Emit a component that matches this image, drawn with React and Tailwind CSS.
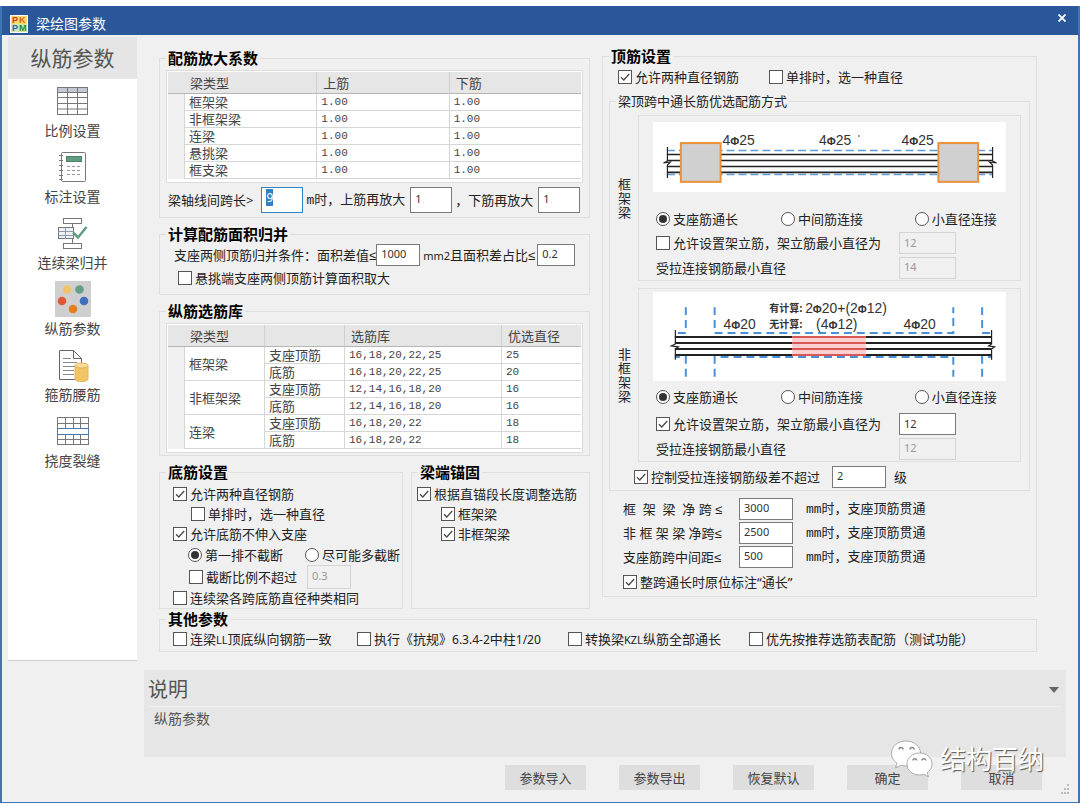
import React, { useEffect, useRef } from "react";
import { clsx } from "clsx";

const factorRows = ["框架梁", "非框架梁", "连梁", "悬挑梁", "框支梁"];

const rebarRows = [
  { type: "框架梁", top: ["16,18,20,22,25", "25"], bottom: ["16,18,20,22,25", "20"] },
  { type: "非框架梁", top: ["12,14,16,18,20", "16"], bottom: ["12,14,16,18,20", "16"] },
  { type: "连梁", top: ["16,18,20,22", "18"], bottom: ["16,18,20,22", "18"] },
];

const spanRows = [
  { id: "span-frame", label: "框  架  梁  净 跨 ≤", value: "3000" },
  { id: "span-other", label: "非 框 架 梁 净跨≤", value: "2500" },
  { id: "span-support", label: "支座筋跨中间距≤", value: "500" },
];

/* ---------- Form controls ---------- */

const Check = ({ label, checked = false, className }) => (
  <label className={clsx("flex h-5 items-center gap-[3px] whitespace-nowrap", className)}>
    <span className="relative flex shrink-0">
      <input
        type="checkbox"
        defaultChecked={checked}
        className="peer size-[14px] appearance-none border border-[#555] bg-white"
      />
      <svg
        viewBox="0 0 14 14"
        className="pointer-events-none absolute inset-0 hidden size-[14px] peer-checked:block"
      >
        <path d="M3 7.2 L5.8 10 L11.2 4" fill="none" stroke="#4a4a4a" strokeWidth="1.3" />
      </svg>
    </span>
    <span>{label}</span>
  </label>
);

const Radio = ({ label, name, checked = false }) => (
  <label className="flex h-5 items-center gap-[3px] whitespace-nowrap">
    <input
      type="radio"
      name={name}
      defaultChecked={checked}
      className="grid size-[14px] shrink-0 appearance-none place-items-center rounded-full border border-[#555] bg-white before:size-2 before:rounded-full checked:before:bg-[#333]"
    />
    {label}
  </label>
);

const Field = ({ id, value, disabled = false, className }) => (
  <input
    id={id}
    type="text"
    defaultValue={value}
    disabled={disabled}
    className={clsx(
      "min-w-0 shrink-0 border px-1 pb-[3px] text-[11px] leading-4",
      disabled ? "border-[#d4d4d4] bg-[#f0f0f0] text-[#999]" : "border-[#7a7a7a] bg-white text-[#333]",
      className
    )}
  />
);

const Group = ({ title, plain = false, className, children }) => (
  <fieldset className={clsx("min-w-0 border border-[#dfdfdf]", className)}>
    <legend
      className={clsx(
        "px-0.5 leading-5",
        plain ? "ml-1.5 text-[13px]" : "ml-1.5 text-[15px] font-bold text-black"
      )}
    >
      {title}
    </legend>
    {children}
  </fieldset>
);

/* ---------- Tables ---------- */

const Th = ({ children }) => (
  <th className="h-[22px] border-b border-l border-b-[#b5b5b5] border-l-[#d0d0d0] bg-[#e6e6e6] px-1.5 py-0 text-left font-normal leading-5 text-[#444] first:border-l-0">
    {children}
  </th>
);

const Td = ({ children, mono = false, rowSpan }) => (
  <td
    rowSpan={rowSpan}
    className={clsx(
      "h-[17px] border-b border-l border-[#d6d6d6] px-1 py-0 leading-4 text-[#444]",
      mono && "font-['Liberation_Mono',monospace] text-[11px]"
    )}
  >
    {children}
  </td>
);

const TableFrame = ({ children }) => (
  <div className="mx-1.5 border border-[#dcdcdc] bg-white px-px pt-px pb-[3px]">{children}</div>
);

const FactorTable = () => (
  <TableFrame>
    <table className="w-full table-fixed border-separate border-spacing-0">
      <colgroup>
        <col className="w-4" />
        <col />
        <col />
        <col />
      </colgroup>
      <thead>
        <tr>
          <Th />
          <th className="h-[22px] border-b border-[#b5b5b5] bg-[#e6e6e6] px-1.5 py-0 text-left font-normal leading-5 text-[#444]">
            梁类型
          </th>
          <Th>上筋</Th>
          <Th>下筋</Th>
        </tr>
      </thead>
      <tbody>
        {factorRows.map((name) => (
          <tr key={name}>
            <td className="bg-[#f0f0f0] p-0"></td>
            <Td>{name}</Td>
            <Td mono>1.00</Td>
            <Td mono>1.00</Td>
          </tr>
        ))}
      </tbody>
    </table>
  </TableFrame>
);

const RebarTable = () => (
  <TableFrame>
    <table className="w-full table-fixed border-separate border-spacing-0">
      <colgroup>
        <col className="w-4" />
        <col className="w-20" />
        <col className="w-20" />
        <col />
        <col className="w-20" />
      </colgroup>
      <thead>
        <tr>
          <Th />
          <th className="h-[22px] border-b border-[#b5b5b5] bg-[#e6e6e6] px-1.5 py-0 text-left font-normal leading-5 text-[#444]">
            梁类型
          </th>
          <Th />
          <Th>选筋库</Th>
          <Th>优选直径</Th>
        </tr>
      </thead>
      <tbody>
        {rebarRows.map((row) => (
          <React.Fragment key={row.type}>
            <tr>
              <td rowSpan={2} className="bg-[#f0f0f0] p-0"></td>
              <Td rowSpan={2}>{row.type}</Td>
              <Td>支座顶筋</Td>
              <Td mono>{row.top[0]}</Td>
              <Td mono>{row.top[1]}</Td>
            </tr>
            <tr>
              <Td>底筋</Td>
              <Td mono>{row.bottom[0]}</Td>
              <Td mono>{row.bottom[1]}</Td>
            </tr>
          </React.Fragment>
        ))}
      </tbody>
    </table>
  </TableFrame>
);

/* ---------- Sidebar icons ---------- */

const GridIcon = () => (
  <svg viewBox="0 0 36 36" className="size-9" fill="none" stroke="#777">
    <rect x="2.5" y="4.5" width="30" height="27" fill="#fff" />
    <rect x="3" y="5" width="29" height="4" fill="#c3cad6" stroke="none" />
    <path d="M2.5 9.5h30M2.5 14.5h30M2.5 20.5h30M2.5 26h30M12.5 4.5v27M22.5 4.5v27" />
  </svg>
);

const NotebookIcon = () => (
  <svg viewBox="0 0 36 36" className="size-9" fill="none" stroke="#777">
    <rect x="6.5" y="3.5" width="24" height="29" rx="1" fill="#fff" />
    <rect x="11.5" y="7.5" width="15" height="5" fill="#5f9c80" stroke="#4d8269" />
    <path d="M4 6.5h4M4 11.5h4M4 16.5h4M4 21.5h4M4 26.5h4M4 30.5h4" />
    <path d="M12 17.5h14M12 21.5h14M12 25.5h14" stroke="#999" strokeDasharray="3 2" />
  </svg>
);

const MergeIcon = () => (
  <svg viewBox="0 0 36 36" className="size-9" fill="none" stroke="#777">
    <rect x="8.5" y="3.5" width="18" height="5" fill="#fff" />
    <path d="M17.5 8.5v4M17.5 24v4" />
    <rect x="3.5" y="12.5" width="15" height="11" fill="#eef2f8" />
    <path d="M3.5 16.5h15M3.5 20.5h15M10.5 12.5v11" stroke="#8e99aa" />
    <path d="M18 17.5l5 5 8.5-10.5" stroke="#5f9c80" strokeWidth="2.5" />
    <rect x="8.5" y="28.5" width="18" height="5" fill="#fff" />
  </svg>
);

const DotsIcon = () => (
  <svg viewBox="0 0 36 36" className="size-9 bg-[#cfcfcf]">
    <circle cx="12" cy="8.5" r="4.3" fill="#f2c468" />
    <circle cx="24.5" cy="8.5" r="4.3" fill="#669f85" />
    <circle cx="7" cy="20" r="4.3" fill="#dc5a3a" />
    <circle cx="29" cy="20" r="4.3" fill="#3f6fbf" />
    <circle cx="18" cy="28" r="4.3" fill="#e2801f" />
  </svg>
);

const DocIcon = () => (
  <svg viewBox="0 0 36 36" className="size-9" fill="none" stroke="#666">
    <path d="M4.5 3.5h14l8 8v21h-22z" fill="#fff" />
    <path d="M18.5 3.5v8h8" />
    <path d="M8 11.5h8M8 15.5h14M8 19.5h12M8 23.5h11M8 27.5h11" stroke="#888" />
    <path d="M20 18.5v13.5c0 3.4 13 3.4 13 0v-13.5z" fill="#f2c468" stroke="#e8b653" />
    <ellipse cx="26.5" cy="18.5" rx="6.5" ry="2.5" fill="#f8dc9c" stroke="#e8b653" />
  </svg>
);

const CrackIcon = () => (
  <svg viewBox="0 0 36 36" className="size-9" fill="none" stroke="#777">
    <rect x="2.5" y="4.5" width="31" height="27" fill="#fff" />
    <path d="M2.5 10.5h31M2.5 26.5h31M10.5 4.5v11M18.5 4.5v11M25.5 4.5v11M10.5 21.5v10M18.5 21.5v10M25.5 21.5v10" />
    <rect x="2.5" y="15.5" width="31" height="6" fill="#fff" stroke="#4a78b5" />
  </svg>
);

const navItems = [
  { label: "比例设置", Icon: GridIcon },
  { label: "标注设置", Icon: NotebookIcon },
  { label: "连续梁归并", Icon: MergeIcon },
  { label: "纵筋参数", Icon: DotsIcon },
  { label: "箍筋腰筋", Icon: DocIcon },
  { label: "挠度裂缝", Icon: CrackIcon },
];

const Sidebar = () => (
  <nav className="mt-0.5 ml-1.5 flex w-[129px] shrink-0 flex-col border-b border-[#d0d0d0] bg-white">
    <h2 className="h-[42px] bg-[#e5e5e5] text-center text-[21px] leading-[42px] text-[#555]">纵筋参数</h2>
    <div className="flex flex-col items-center gap-2 pt-1">
      {navItems.map(({ label, Icon }) => (
        <button key={label} type="button" className="flex flex-col items-center gap-0.5">
          <Icon />
          <span className="h-5 text-sm leading-5 text-[#444]">{label}</span>
        </button>
      ))}
    </div>
  </nav>
);

/* ---------- Beam drawings ---------- */

// Bar diameter sign used inside a callout such as 4Φ25
const Bar = () => (
  <tspan fontSize="11" fontWeight="bold">Φ</tspan>
);

const Callout = ({ x, y, children }) => (
  <text x={x} y={y} fontSize="14" fill="#333" className="font-['Liberation_Sans',sans-serif]">
    {children}
  </text>
);

const FrameBeam = () => (
  <svg viewBox="0 0 355 70" className="h-[70px] w-full bg-white" role="img" aria-label="框架梁">
    <g stroke="#5f9cd8" strokeWidth="1.5" strokeDasharray="8 4">
      <path d="M14 28.5h328M14 52.5h328" />
    </g>
    <path d="M14 32.5h328M14 38.5h328M14 44.5h328M14 50.5h328" stroke="#222" strokeWidth="1.6" />
    <path
      d="M14.5 25v14l-4 2 7-1-3 3v13M341.5 25v14l4 2-7-1 3 3v13"
      fill="none"
      stroke="#222"
      strokeWidth="1.2"
    />
    <g fill="#d0d0d0" stroke="#ea913c" strokeWidth="2">
      <rect x="28" y="21" width="40" height="39" />
      <rect x="287" y="21" width="40" height="39" />
    </g>
    <Callout x="70" y="23">4<Bar />25</Callout>
    <Callout x="167" y="23">4<Bar />25</Callout>
    <Callout x="250" y="23">4<Bar />25</Callout>
    <circle cx="207" cy="14" r="1" fill="#777" />
  </svg>
);

const OtherBeam = () => (
  <svg viewBox="0 0 355 89" className="h-[89px] w-full bg-white" role="img" aria-label="非框架梁">
    <g fill="none" stroke="#4a90d9" strokeWidth="2" strokeDasharray="8 5">
      <path d="M33 15v26h-11M62 15v26h240v-26M331 15v26h10" />
      <path d="M33 85v-20h-11M62 85v-20h240v20M331 85v-20h10" />
    </g>
    <path d="M22 45h318M22 51h318M22 57h318M22 63h318" stroke="#222" strokeWidth="2" />
    <rect x="140" y="44" width="74" height="20" fill="#fbd0d0" />
    <path d="M140 45h74M140 51h74M140 57h74M140 63h74" stroke="#d95757" strokeWidth="2" />
    <path
      d="M22.5 38v14l-4 2 7 1-3 2v11M340.5 38v14l-3 2 6 1-3 2v11"
      fill="none"
      stroke="#222"
      strokeWidth="1.2"
    />
    <g fontSize="10" fontWeight="bold" fill="#333" className="font-['Noto_Sans_CJK_SC',sans-serif]">
      <text x="117" y="20">有计算:</text>
      <text x="117" y="36">无计算:</text>
    </g>
    <Callout x="153" y="21">2<Bar />20+(2<Bar />12)</Callout>
    <Callout x="164" y="37">(4<Bar />12)</Callout>
    <Callout x="71" y="37">4<Bar />20</Callout>
    <Callout x="252" y="37">4<Bar />20</Callout>
  </svg>
);

const SpliceRadios = ({ name }) => (
  <div className="grid grid-cols-[126fr_135fr_106fr] pl-[17px]">
    <Radio name={name} label="支座筋通长" checked />
    <Radio name={name} label="中间筋连接" />
    <Radio name={name} label="小直径连接" />
  </div>
);

const BeamOptions = ({ id, checked, erection, minimum }) => (
  <div className="pr-16 pl-[17px]">
    <div className="flex h-[25px] items-center justify-between">
      <Check label="允许设置架立筋，架立筋最小直径为" checked={checked} />
      <input
        type="text"
        aria-label="架立筋最小直径"
        defaultValue={erection}
        disabled={!checked}
        className="h-[22px] w-[57px] border border-[#7a7a7a] bg-white px-1 text-[11px] text-[#333] disabled:border-[#d4d4d4] disabled:bg-[#f0f0f0] disabled:text-[#999]"
      />
    </div>
    <div className="flex h-[25px] items-center justify-between">
      <label htmlFor={id}>受拉连接钢筋最小直径</label>
      <Field id={id} value={minimum} disabled className="h-[22px] w-[57px]" />
    </div>
  </div>
);

/* ---------- Parameter groups ---------- */

const FactorGroup = () => {
  const spanRef = useRef(null);

  useEffect(() => {
    // Start with the span length selected, ready to be typed over
    spanRef.current.focus();
    spanRef.current.select();
  }, []);

  return (
    <Group title="配筋放大系数">
      <div className="pt-0.5">
        <FactorTable />
      </div>
      <div className="flex items-center pt-1 pb-1 pl-2 whitespace-nowrap">
        <label htmlFor="span-length">梁轴线间跨长&gt;</label>
        <input
          ref={spanRef}
          id="span-length"
          type="text"
          defaultValue="9"
          className="ml-2 h-[26px] w-[42px] border border-[#2f83c5] bg-white px-1 pb-1.5 text-[12px] leading-4 outline-none selection:bg-[#2f83c5] selection:text-white"
        />
        <label htmlFor="top-factor" className="ml-[3px]">
          <span className="font-['Liberation_Mono',monospace]">m</span>时，上筋再放大
        </label>
        <Field id="top-factor" value="1" className="ml-[5px] h-[26px] w-[42px]" />
        <label htmlFor="bottom-factor" className="ml-[3px]">，下筋再放大</label>
        <Field id="bottom-factor" value="1" className="ml-[5px] h-[26px] w-[42px]" />
      </div>
    </Group>
  );
};

const MergeGroup = () => (
  <Group title="计算配筋面积归并">
    <div className="flex items-center pl-[14px] whitespace-nowrap">
      <label htmlFor="area-diff">支座两侧顶筋归并条件：面积差值≤</label>
      <Field id="area-diff" value="1000" className="h-[22px] w-11" />
      <label htmlFor="area-ratio" className="ml-[3px]">
        <span className="text-[11px]">mm2</span>且面积差占比≤
      </label>
      <Field id="area-ratio" value="0.2" className="ml-0.5 h-[22px] w-[38px]" />
    </div>
    <div className="pt-0.5 pb-1.5 pl-[18px]">
      <Check label="悬挑端支座两侧顶筋计算面积取大" />
    </div>
  </Group>
);

const BottomGroup = () => (
  <Group title="底筋设置">
    <div className="pt-0.5 pl-[13px]">
      <Check label="允许两种直径钢筋" checked />
      <Check label="单排时，选一种直径" className="pl-[18px]" />
      <Check label="允许底筋不伸入支座" checked />
      <div className="flex h-[22px] items-center justify-between pr-0.5 pl-[15px]">
        <Radio name="cut" label="第一排不截断" checked />
        <Radio name="cut" label="尽可能多截断" />
      </div>
      <div className="flex h-[22px] items-center gap-2.5 pl-4">
        <Check label="截断比例不超过" />
        <input
          type="text"
          aria-label="截断比例"
          defaultValue="0.3"
          disabled
          className="h-6 w-11 border border-[#d4d4d4] px-1 pb-1 text-[11px] text-[#999]"
        />
      </div>
      <Check label="连续梁各跨底筋直径种类相同" />
    </div>
  </Group>
);

const AnchorGroup = () => (
  <Group title="梁端锚固">
    <div className="pt-0.5 pl-[5px]">
      <Check label="根据直锚段长度调整选筋" checked />
      <Check label="框架梁" checked className="pl-6" />
      <Check label="非框架梁" checked className="pl-6" />
    </div>
  </Group>
);

const SideLabel = ({ children }) => (
  <span className="ml-2 w-[13px] shrink-0 text-center leading-[14px]">{children}</span>
);

const TopGroup = () => (
  <Group title="顶筋设置" className="self-start">
    <div className="flex gap-[30px] pt-px pl-[15px]">
      <Check label="允许两种直径钢筋" checked />
      <Check label="单排时，选一种直径" />
    </div>
    <Group title="梁顶跨中通长筋优选配筋方式" plain className="mx-1.5 mt-1">
      <div className="flex items-center gap-[7px] pt-1 pr-2">
        <SideLabel>框架梁</SideLabel>
        <div className="min-w-0 flex-1 border border-[#dfdfdf]">
          <div className="px-[14px] pt-1.5">
            <FrameBeam />
          </div>
          <div className="pt-[17px] pb-px">
            <SpliceRadios name="frame-splice" />
          </div>
          <BeamOptions id="frame-min" checked={false} erection="12" minimum="14" />
        </div>
      </div>
      <div className="flex items-center gap-[7px] pt-[7px] pr-2">
        <SideLabel>非框架梁</SideLabel>
        <div className="min-w-0 flex-1 border border-[#dfdfdf]">
          <div className="px-[14px] pt-[3px]">
            <OtherBeam />
          </div>
          <div className="pt-1.5 pb-1">
            <SpliceRadios name="other-splice" />
          </div>
          <BeamOptions id="other-min" checked erection="12" minimum="12" />
        </div>
      </div>
      <div className="flex items-center pt-1 pb-0.5 pl-6">
        <Check label="控制受拉连接钢筋级差不超过" checked />
        <Field id="grade-diff" value="2" className="ml-3 h-[22px] w-[54px]" />
        <label htmlFor="grade-diff" className="ml-2">级</label>
      </div>
    </Group>
    <div className="flex flex-col gap-0.5 pt-[7px] pl-5">
      {spanRows.map((row) => (
        <div key={row.id} className="flex items-center">
          <label htmlFor={row.id} className="w-[116px] whitespace-pre">{row.label}</label>
          <Field id={row.id} value={row.value} className="h-[22px] w-[54px]" />
          <span className="ml-[13px]">
            <span className="font-['Liberation_Mono',monospace]">mm</span>时，支座顶筋贯通
          </span>
        </div>
      ))}
    </div>
    <div className="pt-1 pb-1 pl-5">
      <Check label="整跨通长时原位标注“通长”" checked />
    </div>
  </Group>
);

const OtherGroup = () => (
  <Group title="其他参数">
    <div className="grid grid-cols-[184fr_211fr_181fr_287fr] pb-0.5 pl-[13px]">
      <Check label={<>连梁<span className="text-[11px]">LL</span>顶底纵向钢筋一致</>} />
      <Check
        label={
          <>
            执行《抗规》<span className="text-[12px]">6.3.4-2</span>中柱
            <span className="text-[12px]">1/20</span>
          </>
        }
      />
      <Check label={<>转换梁<span className="text-[11px]">KZL</span>纵筋全部通长</>} />
      <Check label="优先按推荐选筋表配筋（测试功能）" />
    </div>
  </Group>
);

/* ---------- Window chrome ---------- */

const TitleBar = () => (
  <header className="flex h-[29px] items-center bg-[#2a569a] pl-2 text-white">
    <svg viewBox="0 0 18 18" className="mt-1.5 size-[18px]">
      <rect width="18" height="18" fill="#fff" />
      <rect x="1" y="1" width="16" height="8" fill="#f6dc6a" />
      <rect x="1" y="9" width="16" height="8" fill="#cfe6b0" />
      <g fontSize="9" fontWeight="bold" className="font-['Liberation_Sans',sans-serif]">
        <text x="2" y="8" fill="#d8322a">P</text>
        <text x="9" y="8" fill="#e2651f">K</text>
        <text x="2" y="16" fill="#2a62b8">P</text>
        <text x="9" y="16" fill="#2c8a3c">M</text>
      </g>
    </svg>
    <h1 className="mt-1.5 ml-2 text-sm leading-5">梁绘图参数</h1>
    <button type="button" aria-label="关闭" className="mr-3 mb-1.5 ml-auto">
      <svg viewBox="0 0 8 8" className="size-2" stroke="#fff" strokeWidth="1.8">
        <path d="M0.5 0.5l7 7M7.5 0.5l-7 7" />
      </svg>
    </button>
  </header>
);

const Description = () => (
  <section className="mt-[9px] mr-3 ml-[142px] h-[87px] bg-[#e6e6e6] px-1">
    <div className="flex h-[37px] items-center justify-between border-b border-[#efefef] pt-1 pr-[3px]">
      <h2 className="text-xl text-[#555]">说明</h2>
      <button type="button" aria-label="收起说明">
        <svg viewBox="0 0 10 6" className="h-1.5 w-2.5">
          <path d="M0 0h10l-5 6z" fill="#666" />
        </svg>
      </button>
    </div>
    <p className="px-1.5 pt-0.5 text-sm text-[#555]">纵筋参数</p>
  </section>
);

const Watermark = () => (
  <div className="pointer-events-none absolute right-[34px] bottom-6 flex items-center gap-1.5">
    <svg viewBox="0 0 44 38" className="h-[38px] w-11" stroke="#999" strokeWidth="0.8">
      <path
        fill="#fff"
        d="M16 1C7.500 1 1.500 6.500 1.500 13.500c0 4 2 7.500 5.500 9.800L5.500 28l5.500-2.800c1.600.5 3.200.8 5 .8 8.500 0 14.500-5.500 14.500-12.500S24.500 1 16 1z"
      />
      <path
        fill="#fff"
        d="M29.500 13C22.500 13 17 17.800 17 24s5.500 11 12.500 11c1.500 0 3-.2 4.300-.7l4.700 2.500-1.300-4c3-2.200 4.800-5.300 4.800-8.800 0-6.200-5.500-11-12.500-11z"
      />
      <g fill="none" stroke="#888" strokeWidth="1.5">
        <path d="M9 9.500a2 2 0 0 1 4 0M20 9.500a2 2 0 0 1 4 0M23 20.500a1.800 1.800 0 0 1 3.600 0M32 20.500a1.800 1.800 0 0 1 3.600 0" />
      </g>
    </svg>
    <span className="text-[26px] leading-8 text-white [text-shadow:1px_1px_1px_#555]">结构百纳</span>
  </div>
);

const App = () => {
  return (
    <div className="min-h-screen bg-white pt-1.5 pb-[7px] font-['Noto_Sans','Liberation_Sans','Noto_Sans_CJK_SC',sans-serif] text-[13px] leading-5 text-[#222]">
      <div className="relative border-x-2 border-b border-[#3f74b3] bg-[#f0f0f0]">
        <TitleBar />
        <div className="flex">
          <Sidebar />
          <main className="min-w-0 flex-1 pt-[11px] pr-[41px] pb-[9px] pl-[22px]">
            <div className="grid grid-cols-[431fr_435fr] gap-3">
              <div className="flex min-w-0 flex-col gap-1.5 pt-0.5">
                <FactorGroup />
                <MergeGroup />
                <Group title="纵筋选筋库">
                  <div className="pt-0.5 pb-0.5">
                    <RebarTable />
                  </div>
                </Group>
                <div className="grid grid-cols-[244fr_179fr] gap-2">
                  <BottomGroup />
                  <AnchorGroup />
                </div>
              </div>
              <TopGroup />
            </div>
            <OtherGroup />
          </main>
        </div>
        <Description />
        <footer className="mt-2 flex justify-end gap-[33px] pr-9 pb-3">
          {["参数导入", "参数导出", "恢复默认", "确定", "取消"].map((name) => (
            <button key={name} type="button" className="h-[25px] w-[81px] bg-[#dedede] text-[#444]">
              {name}
            </button>
          ))}
        </footer>
        <svg viewBox="0 0 10 10" className="absolute right-2 bottom-2 size-2.5" fill="#bbb">
          <path d="M7 0h2v2h-2zM7 4h2v2h-2zM4 4h2v2h-2zM7 8h2v2h-2zM4 8h2v2h-2zM1 8h2v2h-2z" />
        </svg>
        <Watermark />
      </div>
    </div>
  );
};

export default App;
